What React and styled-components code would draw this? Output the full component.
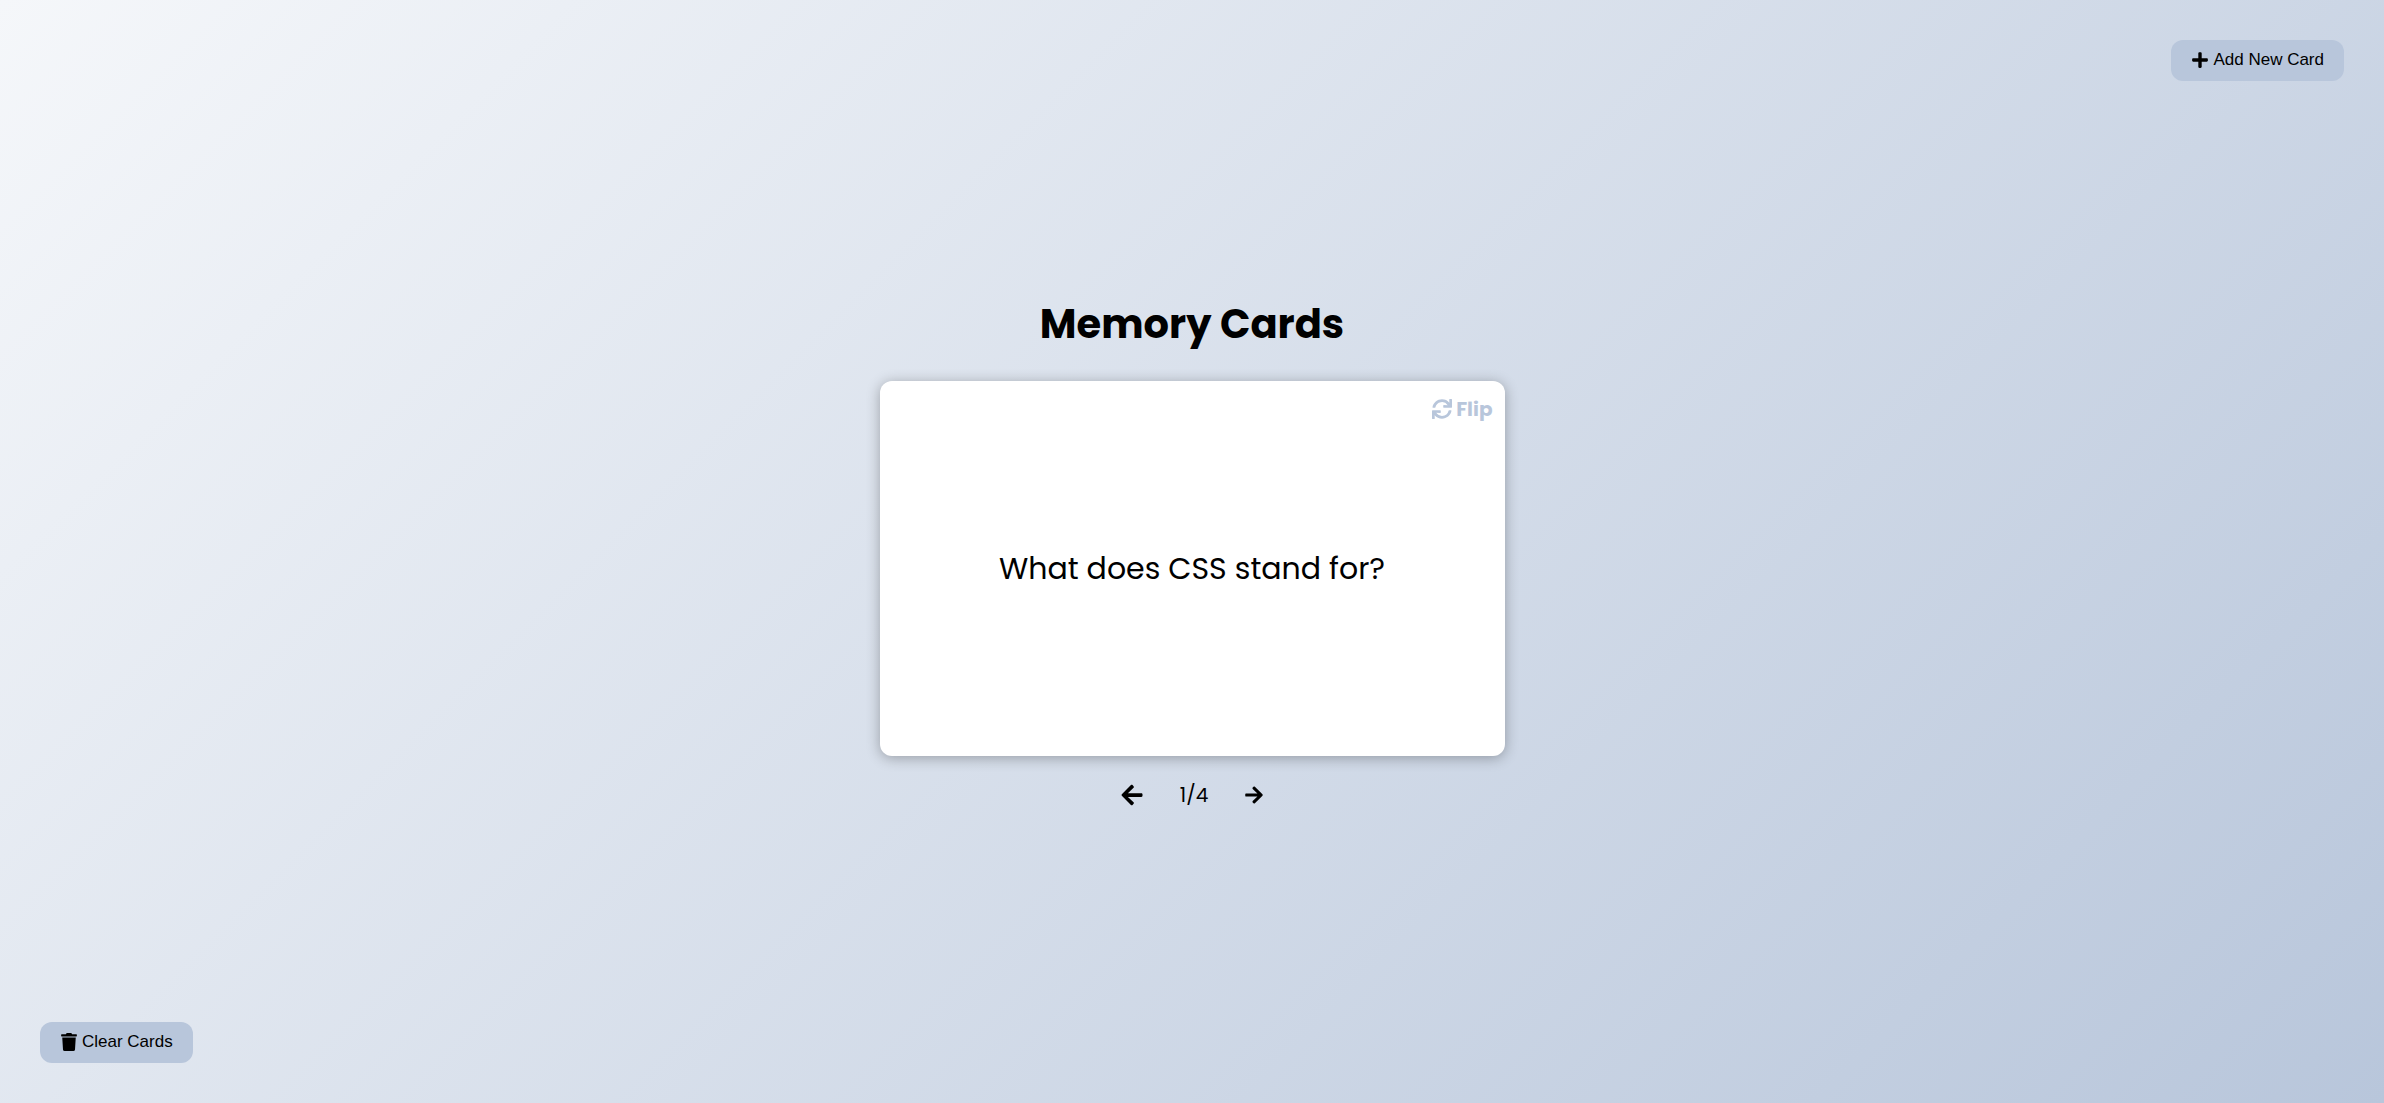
import React, { useState } from "react";
import styled, { createGlobalStyle } from "styled-components";
import {
  FaPlus,
  FaTrash,
  FaArrowLeft,
  FaArrowRight,
  FaSync,
} from "react-icons/fa";

const GlobalStyle = createGlobalStyle`
  * {
    box-sizing: border-box;
  }

  body {
    margin: 0;
    color: #000;
    font-family: Poppins, Inter, sans-serif;
  }

  button svg {
    width: auto;
  }
`;

const Page = styled.div`
  display: flex;
  flex-direction: column;
  justify-content: space-between;
  min-height: 100vh;
  padding: 40px;
  background: linear-gradient(135deg, #f5f7fa 0%, #b8c6db 100%);
`;

const ActionButton = styled.button`
  display: flex;
  align-items: center;
  align-self: ${({ $align }) => $align};
  gap: 4px;
  height: 41px;
  padding: 0 20px 2px;
  border: none;
  border-radius: 12px;
  background: #b8c6db;
  color: #000;
  font: 17px "Liberation Sans", Arial, sans-serif;
  cursor: pointer;
`;

const Deck = styled.main`
  display: flex;
  flex-direction: column;
  align-items: center;
`;

const Title = styled.h1`
  margin: 0 0 27px;
  font-size: 40px;
  font-weight: 700;
  line-height: 60px;
`;

const Card = styled.section`
  display: flex;
  flex-direction: column;
  width: 625px;
  max-width: 100%;
  min-height: 375px;
  padding: 12px;
  border-radius: 12px;
  background: #fff;
  box-shadow: 0 2px 14px rgba(0, 0, 0, 0.3);
`;

const FlipButton = styled.button`
  display: flex;
  align-items: center;
  align-self: flex-end;
  gap: 4px;
  padding: 0;
  border: none;
  background: none;
  color: #b8c6db;
  font: inherit;
  font-size: 20px;
  font-weight: 700;
  line-height: 32px;
  cursor: pointer;
`;

const CardText = styled.p`
  display: flex;
  flex: 1;
  align-items: center;
  justify-content: center;
  margin: 0 0 32px;
  font-size: 30px;
  line-height: 45px;
  text-align: center;
`;

const Pager = styled.nav`
  display: flex;
  align-items: center;
  justify-content: center;
  gap: 36px;
  margin-top: 24px;
  font-size: 20px;
  line-height: 30px;
`;

const PagerButton = styled.button`
  display: flex;
  padding: 0;
  border: none;
  background: none;
  color: inherit;
  font-size: ${({ $size }) => $size}px;
  cursor: pointer;
`;

const cards = [
  { question: "What does CSS stand for?", answer: "Cascading Style Sheets" },
  { question: "What does HTML stand for?", answer: "HyperText Markup Language" },
  { question: "What does DOM stand for?", answer: "Document Object Model" },
  { question: "What does URL stand for?", answer: "Uniform Resource Locator" },
];

export default function App() {
  const [index, setIndex] = useState(0);
  const [flipped, setFlipped] = useState(false);

  const move = (step) => {
    setIndex((index + step + cards.length) % cards.length);
    setFlipped(false);
  };

  return (
    <>
      <GlobalStyle />
      <Page>
        <ActionButton type="button" $align="flex-end">
          <FaPlus size={18} />
          Add New Card
        </ActionButton>
        <Deck>
          <Title>Memory Cards</Title>
          <Card>
            <FlipButton type="button" onClick={() => setFlipped(!flipped)}>
              <FaSync />
              Flip
            </FlipButton>
            <CardText>
              {flipped ? cards[index].answer : cards[index].question}
            </CardText>
          </Card>
          <Pager>
            <PagerButton
              type="button"
              aria-label="Previous card"
              $size={24}
              onClick={() => move(-1)}
            >
              <FaArrowLeft />
            </PagerButton>
            <span>
              {index + 1}/{cards.length}
            </span>
            <PagerButton
              type="button"
              aria-label="Next card"
              $size={20}
              onClick={() => move(1)}
            >
              <FaArrowRight />
            </PagerButton>
          </Pager>
        </Deck>
        <ActionButton type="button" $align="flex-start">
          <FaTrash size={18} />
          Clear Cards
        </ActionButton>
      </Page>
    </>
  );
}
